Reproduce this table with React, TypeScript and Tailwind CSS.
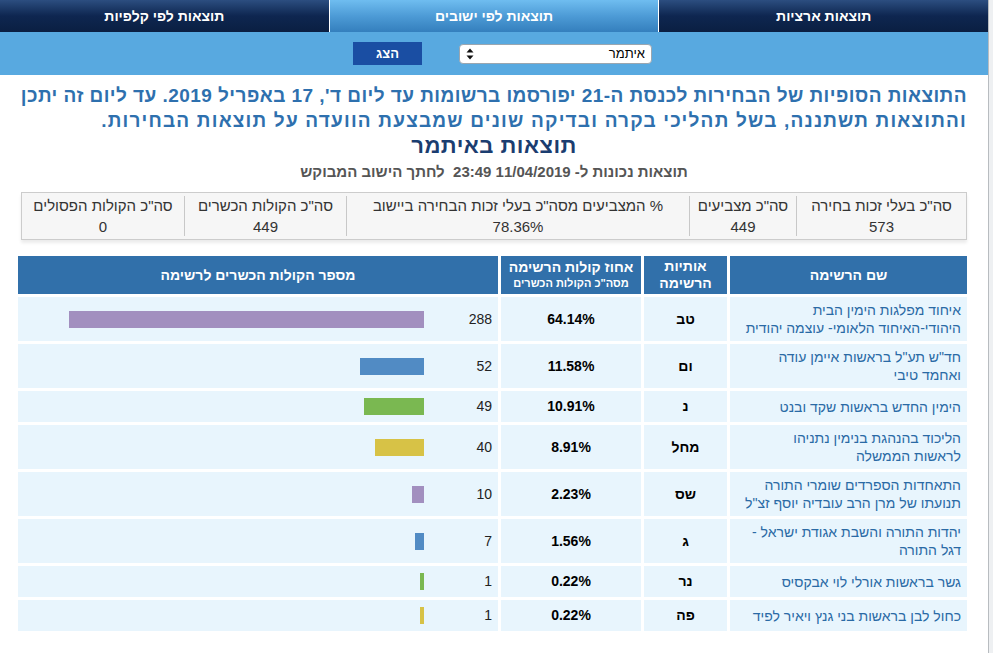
import React from "react";

interface Party { name: string[]; letters: string; pct: string; votes: number; color: string; }

const parties: Party[] = [
  { name: ["איחוד מפלגות הימין הבית", "היהודי-האיחוד הלאומי- עוצמה יהודית"], letters: "טב", pct: "64.14%", votes: 288, color: "#a28fbf" },
  { name: ["חד\"ש תע\"ל בראשות איימן עודה", "ואחמד טיבי"], letters: "ום", pct: "11.58%", votes: 52, color: "#518bc4" },
  { name: ["הימין החדש בראשות שקד ובנט"], letters: "נ", pct: "10.91%", votes: 49, color: "#7ab851" },
  { name: ["הליכוד בהנהגת בנימין נתניהו", "לראשות הממשלה"], letters: "מחל", pct: "8.91%", votes: 40, color: "#d7c246" },
  { name: ["התאחדות הספרדים שומרי התורה", "תנועתו של מרן הרב עובדיה יוסף זצ\"ל"], letters: "שס", pct: "2.23%", votes: 10, color: "#a28fbf" },
  { name: ["יהדות התורה והשבת אגודת ישראל -", "דגל התורה"], letters: "ג", pct: "1.56%", votes: 7, color: "#518bc4" },
  { name: ["גשר בראשות אורלי לוי אבקסיס"], letters: "נר", pct: "0.22%", votes: 1, color: "#7ab851" },
  { name: ["כחול לבן בראשות בני גנץ ויאיר לפיד"], letters: "פה", pct: "0.22%", votes: 1, color: "#d7c246" },
];

const stats = [
  { label: "סה\"כ בעלי זכות בחירה", value: "573", w: "w-[170px]" },
  { label: "סה\"כ מצביעים", value: "449", w: "w-[107px]" },
  { label: "% המצביעים מסה\"כ בעלי זכות הבחירה ביישוב", value: "78.36%", w: "w-[343px]" },
  { label: "סה\"כ הקולות הכשרים", value: "449", w: "w-[162px]" },
  { label: "סה\"כ הקולות הפסולים", value: "0", w: "flex-1" },
];

const cols = "grid grid-cols-[237px_83px_140px_480px] gap-x-[3px]";

function Tab({ label, active }: { label: string; active?: boolean }) {
  return (
    <div
      className={
        active
          ? "flex-1 flex items-center justify-center text-white font-bold text-[14px] bg-gradient-to-b from-[#6fbdf0] via-[#4d9bd6] to-[#347fbd]"
          : "flex-1 flex items-center justify-center text-white font-bold text-[14px] bg-gradient-to-b from-[#2c4e80] via-[#0e2650] to-[#0a1f42]"
      }
    >
      {label}
    </div>
  );
}

export default function App() {
  return (
    <div className="flex h-[653px] overflow-hidden bg-white" style={{ fontFamily: "'Liberation Sans', Arial, sans-serif" }}>
      <div dir="rtl" className="w-[988px] shrink-0">
        <div className="flex h-[32px] gap-x-px bg-white">
          <Tab label="תוצאות ארציות" />
          <Tab label="תוצאות לפי ישובים" active />
          <Tab label="תוצאות לפי קלפיות" />
        </div>

        <div className="h-[43px] bg-[#58a9e0] flex items-center pr-[336px] gap-[37px]">
          <div className="w-[193px] h-[20px] bg-white rounded-[4px] border border-[#9aa6b0] flex items-center justify-between px-[6px]">
            <span className="text-[13px] text-black">איתמר</span>
            <svg width="8" height="12" viewBox="0 0 8 12">
              <path d="M4 0.5 L7.5 4.5 L0.5 4.5 Z" fill="#111" />
              <path d="M4 11.5 L7.5 7.5 L0.5 7.5 Z" fill="#111" />
            </svg>
          </div>
          <button className="w-[69px] h-[23px] bg-[#1a4ea3] text-white font-bold text-[13px]">הצג</button>
        </div>

        <div className="px-[21px] pt-[8px]">
          <div className="text-[19px] leading-[25px] font-bold text-[#2e70ae] whitespace-nowrap">
            <div className="tracking-[0.45px]">התוצאות הסופיות של הבחירות לכנסת ה-21 יפורסמו ברשומות עד ליום ד', 17 באפריל 2019. עד ליום זה יתכן</div>
            <div className="tracking-[1.2px]">והתוצאות תשתננה, בשל תהליכי בקרה ובדיקה שונים שמבצעת הוועדה על תוצאות הבחירות.</div>
          </div>
          <div className="flex justify-center">
            <span className="text-[22px] leading-[26px] font-bold text-[#1b3d70] tracking-[0.5px]">תוצאות באיתמר</span>
          </div>
          <div className="flex justify-center mt-[3px]">
            <span className="text-[15px] leading-[20px] font-bold text-[#555]">
              תוצאות נכונות ל- 11/04/2019 23:49 &nbsp;לחתך הישוב המבוקש
            </span>
          </div>

          <div className="mt-[10px] h-[48px] bg-[#f6f6f6] border border-[#cccccc] shadow-[0_3px_3px_rgba(0,0,0,0.08)] flex items-center">
            {stats.map((s, i) => (
              <div key={i} className={`${s.w} h-[40px] flex flex-col items-center justify-center text-[15px] leading-[21px] text-[#333] ${i < stats.length - 1 ? "border-l border-[#c8c8c8]" : ""}`}>
                <div>{s.label}</div>
                <div>{s.value}</div>
              </div>
            ))}
          </div>

          <div className={`${cols} mt-[16px] h-[38px] text-white font-bold`}>
            <div className="bg-[#3170aa] flex items-center justify-center text-[14px]">שם הרשימה</div>
            <div className="bg-[#3170aa] flex flex-col items-center justify-center text-[14px] leading-[17px]">
              <span>אותיות</span>
              <span>הרשימה</span>
            </div>
            <div className="bg-[#3170aa] flex flex-col items-center justify-center leading-[16px]">
              <span className="text-[14px]">אחוז קולות הרשימה</span>
              <span className="text-[11px]">מסה"כ הקולות הכשרים</span>
            </div>
            <div className="bg-[#3170aa] flex items-center justify-center text-[14px]">מספר הקולות הכשרים לרשימה</div>
          </div>

          <div className="flex flex-col gap-y-[3px] mt-[3px]">
            {parties.map((p, i) => (
              <div key={i} className={`${cols} ${p.name.length > 1 ? "h-[44px]" : "h-[31px]"}`}>
                <div className="bg-[#e8f5fd] flex flex-col justify-center pr-[6px] text-[14px] leading-[18px] text-[#2a6aa5]">
                  {p.name.map((l, j) => (
                    <span key={j}>{l}</span>
                  ))}
                </div>
                <div className="bg-[#e8f5fd] flex items-center justify-center text-[14px] font-bold text-black">{p.letters}</div>
                <div className="bg-[#e8f5fd] flex items-center justify-center text-[14px] font-bold text-black">{p.pct}</div>
                <div className="bg-[#e8f5fd] flex items-center">
                  <div className="w-[74px] pr-[6px] text-right text-[14px] text-[#222]">{p.votes}</div>
                  <div className="h-[17px]" style={{ width: Math.max(4, Math.round(p.votes * 1.233)), backgroundColor: p.color }} />
                </div>
              </div>
            ))}
          </div>
        </div>
      </div>
      <div className="flex-1 bg-[#eef0f2] border-l border-[#b8bcc0]" />
    </div>
  );
}
